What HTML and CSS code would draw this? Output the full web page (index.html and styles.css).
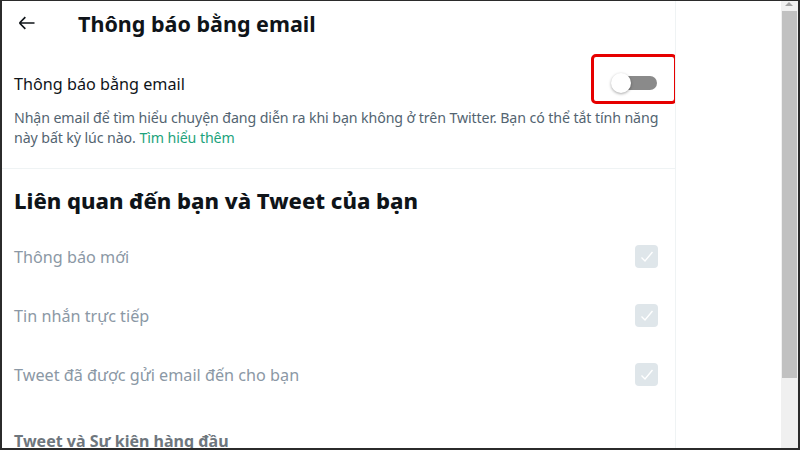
FILE: index.html
```html
<!DOCTYPE html>
<html lang="vi">
<head>
    <meta charset="UTF-8">
    <meta name="viewport" content="width=device-width, initial-scale=1.0">
    <title>Thông báo bằng email</title>
    <link rel="stylesheet" href="styles.css">
</head>
<body>
    <div class="frame">
        <div class="main">
            <div class="header">
                <button class="back" aria-label="Quay lại">
                    <svg width="20" height="20" viewBox="0 0 24 24"><path d="M3 12h18M3 12l7-7M3 12l7 7" fill="none" stroke="#0f1419" stroke-width="2"/></svg>
                </button>
                <h1>Thông báo bằng email</h1>
            </div>

            <div class="section">
                <div class="row toggle-row">
                    <span class="label">Thông báo bằng email</span>
                    <div class="highlight">
                        <div class="switch"><span class="knob"></span></div>
                    </div>
                </div>
                <p class="desc">Nhận email để tìm hiểu chuyện đang diễn ra khi bạn không ở trên Twitter. Bạn có thể tắt tính năng này bất kỳ lúc nào. <a href="#">Tìm hiểu thêm</a></p>
            </div>

            <h2>Liên quan đến bạn và Tweet của bạn</h2>

            <div class="row check-row">
                <span class="label muted">Thông báo mới</span>
                <span class="check"><svg width="16" height="16" viewBox="0 0 16 16"><path d="M2.5 8.5l3.5 3.5 7.5-9" fill="none" stroke="#fff" stroke-width="1.4"/></svg></span>
            </div>
            <div class="row check-row">
                <span class="label muted">Tin nhắn trực tiếp</span>
                <span class="check"><svg width="16" height="16" viewBox="0 0 16 16"><path d="M2.5 8.5l3.5 3.5 7.5-9" fill="none" stroke="#fff" stroke-width="1.4"/></svg></span>
            </div>
            <div class="row check-row">
                <span class="label muted">Tweet đã được gửi email đến cho bạn</span>
                <span class="check"><svg width="16" height="16" viewBox="0 0 16 16"><path d="M2.5 8.5l3.5 3.5 7.5-9" fill="none" stroke="#fff" stroke-width="1.4"/></svg></span>
            </div>

            <h3>Tweet và Sư kiên hàng đầu</h3>
        </div>
        <div class="side"></div>
        <div class="scrollbar">
            <div class="arrow"></div>
            <div class="thumb"></div>
        </div>
    </div>
</body>
</html>
```

FILE: styles.css
```css
* {
    box-sizing: border-box;
}
body {
    margin: 0;
    font-family: "Noto Sans", "Open Sans", sans-serif;
    color: #0f1419;
    background: #fff;
}
.frame {
    width: 800px;
    height: 450px;
    display: flex;
    border-top: 1px solid #2b2b2b;
    border-left: 2px solid #2b2b2b;
    border-right: 2px solid #2b2b2b;
    border-bottom: 2px solid #2b2b2b;
    overflow: hidden;
}
.main {
    width: 674px;
    flex: none;
    border-right: 1px solid #eff3f4;
    overflow: hidden;
}
.side {
    flex: 1;
}
.scrollbar {
    width: 17px;
    flex: none;
    padding: 10px 1px 0 1px;
    background-color: #f0f0f0;
    position: relative;
}
.arrow {
    position: absolute;
    left: 4px;
    top: 1px;
    width: 0;
    height: 0;
    border-left: 4px solid transparent;
    border-right: 4px solid transparent;
    border-bottom: 4px solid #a3a3a3;
}
.thumb {
    width: 15px;
    height: 367px;
    background-color: #c1c1c1;
}
.header {
    display: flex;
    align-items: center;
    height: 44px;
    padding-left: 13px;
}
.back {
    width: 24px;
    height: 24px;
    padding: 0;
    border: none;
    background: none;
    display: flex;
    align-items: center;
    justify-content: center;
    margin-right: 39px;
}
h1 {
    margin: 0;
    font-size: 21.5px;
    font-weight: 700;
}
.section {
    border-bottom: 1px solid #eff3f4;
    padding-bottom: 20px;
}
.row {
    display: flex;
    align-items: center;
    justify-content: space-between;
    padding: 0 17px 0 12px;
}
.toggle-row {
    height: 62px;
    padding-top: 16px;
    padding-right: 0;
}
.label {
    font-size: 16.2px;
}
.muted {
    color: #8b98a5;
}
.highlight {
    width: 86px;
    height: 50px;
    border: 3px solid #e60000;
    border-radius: 5px;
    display: flex;
    align-items: center;
    justify-content: center;
    margin: -10px -2px 0 0;
    padding-top: 8px;
}
.switch {
    width: 46px;
    height: 20px;
    position: relative;
    display: flex;
    align-items: center;
    justify-content: flex-end;
}
.switch::before {
    content: "";
    width: 36px;
    height: 14px;
    border-radius: 7px;
    background: #8a8a8a;
}
.knob {
    position: absolute;
    left: 0;
    top: 0;
    width: 20px;
    height: 20px;
    border-radius: 50%;
    background: #fff;
    box-shadow: 0 1px 3px rgba(0, 0, 0, 0.35);
}
.desc {
    margin: 1px 14px 0 12px;
    font-size: 14.2px;
    line-height: 20px;
    color: #536471;
    letter-spacing: -0.1px;
}
.desc a {
    color: #1da37c;
    text-decoration: none;
}
h2 {
    margin: 0;
    padding: 16px 12px 0;
    height: 58px;
    font-size: 22px;
    font-weight: 800;
}
.check-row {
    height: 59px;
}
.check {
    width: 23px;
    height: 23px;
    border-radius: 4px;
    background: #dfe6ea;
    display: flex;
    align-items: center;
    justify-content: center;
}
h3 {
    margin: 0;
    padding: 26px 12px 0;
    font-size: 16px;
    font-weight: 700;
    color: #6e767d;
}
```
